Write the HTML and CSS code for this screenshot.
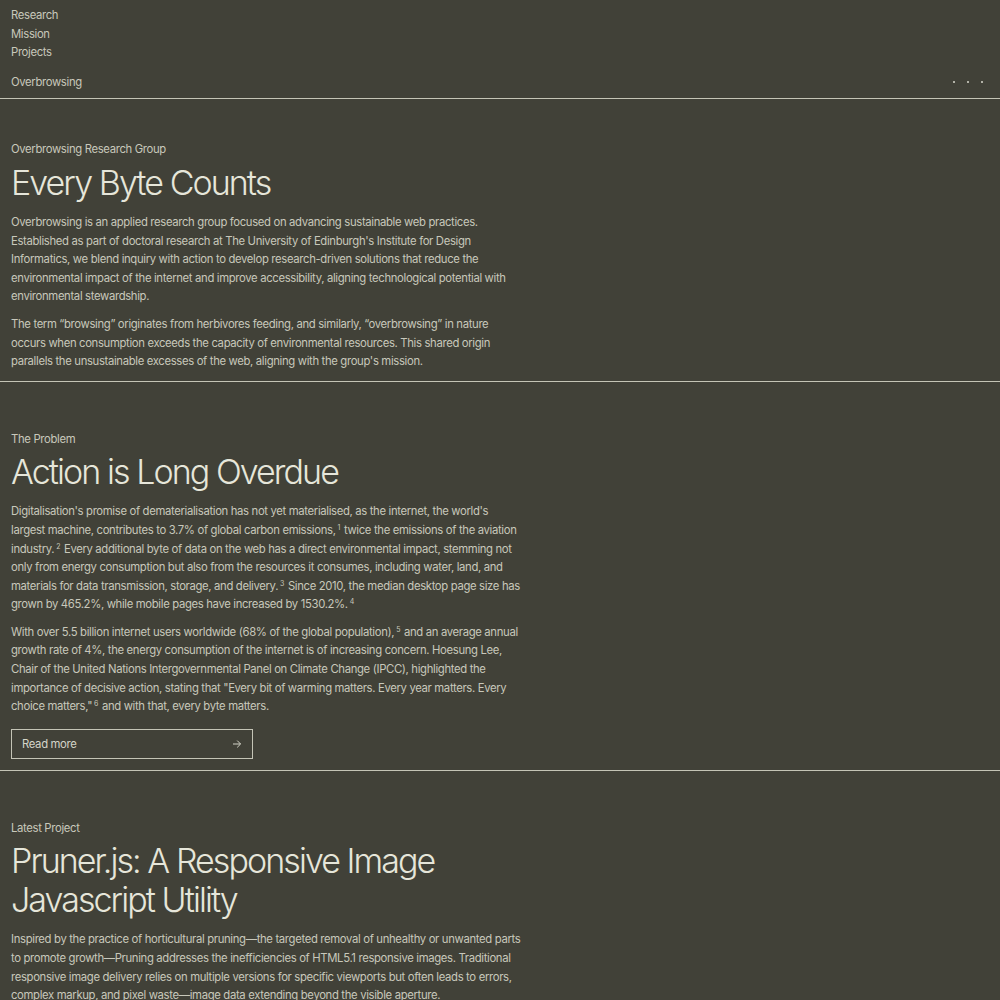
FILE: index.html
```html
<!DOCTYPE html>
<html lang="en">
<head>
<meta charset="utf-8">
<title>Overbrowsing</title>
<link rel="stylesheet" href="styles.css">
</head>
<body>
<header class="site-header">
  <nav class="nav">
    <a href="#" class="nav-link">Research</a>
    <a href="#" class="nav-link">Mission</a>
    <a href="#" class="nav-link">Projects</a>
  </nav>
  <div class="header-bar">
    <a href="#" class="brand">Overbrowsing</a>
    <button class="menu-dots" aria-label="Menu"><span></span><span></span><span></span></button>
  </div>
</header>
<main>
  <section class="section section-first">
    <p class="eyebrow">Overbrowsing Research Group</p>
    <h1 class="title">Every Byte Counts</h1>
    <p class="text">Overbrowsing is an applied research group focused on advancing sustainable web practices. Established as part of doctoral research at The University of Edinburgh's Institute for Design Informatics, we blend inquiry with action to develop research-driven solutions that reduce the environmental impact of the internet and improve accessibility, aligning technological potential with environmental stewardship.</p>
    <p class="text">The term “browsing” originates from herbivores feeding, and similarly, “overbrowsing” in nature occurs when consumption exceeds the capacity of environmental resources. This shared origin parallels the unsustainable excesses of the web, aligning with the group's mission.</p>
  </section>
  <section class="section">
    <p class="eyebrow">The Problem</p>
    <h2 class="title">Action is Long Overdue</h2>
    <p class="text">Digitalisation's promise of dematerialisation has not yet materialised, as the internet, the world's largest machine, contributes to 3.7% of global carbon emissions,<sup>1</sup> twice the emissions of the aviation industry.<sup>2</sup> Every additional byte of data on the web has a direct environmental impact, stemming not only from energy consumption but also from the resources it consumes, including water, land, and materials for data transmission, storage, and delivery.<sup>3</sup> Since 2010, the median desktop page size has grown by 465.2%, while mobile pages have increased by 1530.2%.<sup>4</sup></p>
    <p class="text">With over 5.5 billion internet users worldwide (68% of the global population),<sup>5</sup> and an average annual growth rate of 4%, the energy consumption of the internet is of increasing concern. Hoesung Lee, Chair of the United Nations Intergovernmental Panel on Climate Change (IPCC), highlighted the importance of decisive action, stating that "Every bit of warming matters. Every year matters. Every choice matters,"<sup>6</sup> and with that, every byte matters.</p>
    <a href="#" class="button">
      <span>Read more</span>
      <svg class="arrow" width="10" height="10" viewBox="0 0 10 10" aria-hidden="true"><path d="M1 5h7.5M5.2 1.6 8.6 5 5.2 8.4" fill="none" stroke="currentColor" stroke-width="1"/></svg>
    </a>
  </section>
  <section class="section">
    <p class="eyebrow">Latest Project</p>
    <h2 class="title">Pruner.js: A Responsive Image Javascript Utility</h2>
    <p class="text">Inspired by the practice of horticultural pruning—the targeted removal of unhealthy or unwanted parts to promote growth—Pruning addresses the inefficiencies of HTML5.1 responsive images. Traditional responsive image delivery relies on multiple versions for specific viewports but often leads to errors, complex markup, and pixel waste—image data extending beyond the visible aperture.</p>
  </section>
</main>
</body>
</html>
```

FILE: styles.css
```css
* { box-sizing: border-box; }
html, body { margin: 0; padding: 0; }
body {
  background: #414138;
  color: #c8c8bb;
  font-family: Inter, "Noto Sans", sans-serif;
  font-size: 11.3px;
  line-height: 18.6px;
  letter-spacing: -0.03em;
}
a { color: inherit; text-decoration: none; }

.site-header {
  padding: 6px 0 0;
  border-bottom: 1px solid #c4c4b6;
}
.nav {
  display: flex;
  flex-direction: column;
  padding: 0 11px;
}
.nav-link { display: block; }
.header-bar {
  display: flex;
  justify-content: space-between;
  align-items: center;
  padding: 11px 17px 7px 11px;
}
.menu-dots {
  display: flex;
  gap: 12px;
  background: none;
  border: 0;
  padding: 0;
  margin: 0;
  cursor: pointer;
}
.menu-dots span {
  width: 2px;
  height: 2px;
  background: #d8d8cc;
  border-radius: 50%;
}

.section {
  display: flex;
  flex-direction: column;
  align-items: flex-start;
  padding: 48px 11px 11px;
  border-bottom: 1px solid #c4c4b6;
}
.section-first { padding-top: 41px; padding-bottom: 10px; }
.eyebrow { margin: 0 0 4px; }
.title {
  margin: 0 0 11px;
  font-weight: 300;
  font-size: 34px;
  line-height: 39px;
  letter-spacing: -0.057em;
  color: #e6e6da;
  max-width: 470px;
}
.text {
  margin: 0 0 9px;
  max-width: 512px;
}
.text:last-child { margin-bottom: 0; }
sup {
  font-size: 7px;
  line-height: 0;
  vertical-align: 4px;
  margin: 0 1px 0 2px;
}
.button {
  display: flex;
  justify-content: space-between;
  align-items: center;
  width: 242px;
  height: 30px;
  margin: 4px 0 0;
  padding: 0 10px 0 10px;
  border: 1px solid #c4c4b6;
  color: #d4d4c8;
}
.arrow { display: block; }
```
